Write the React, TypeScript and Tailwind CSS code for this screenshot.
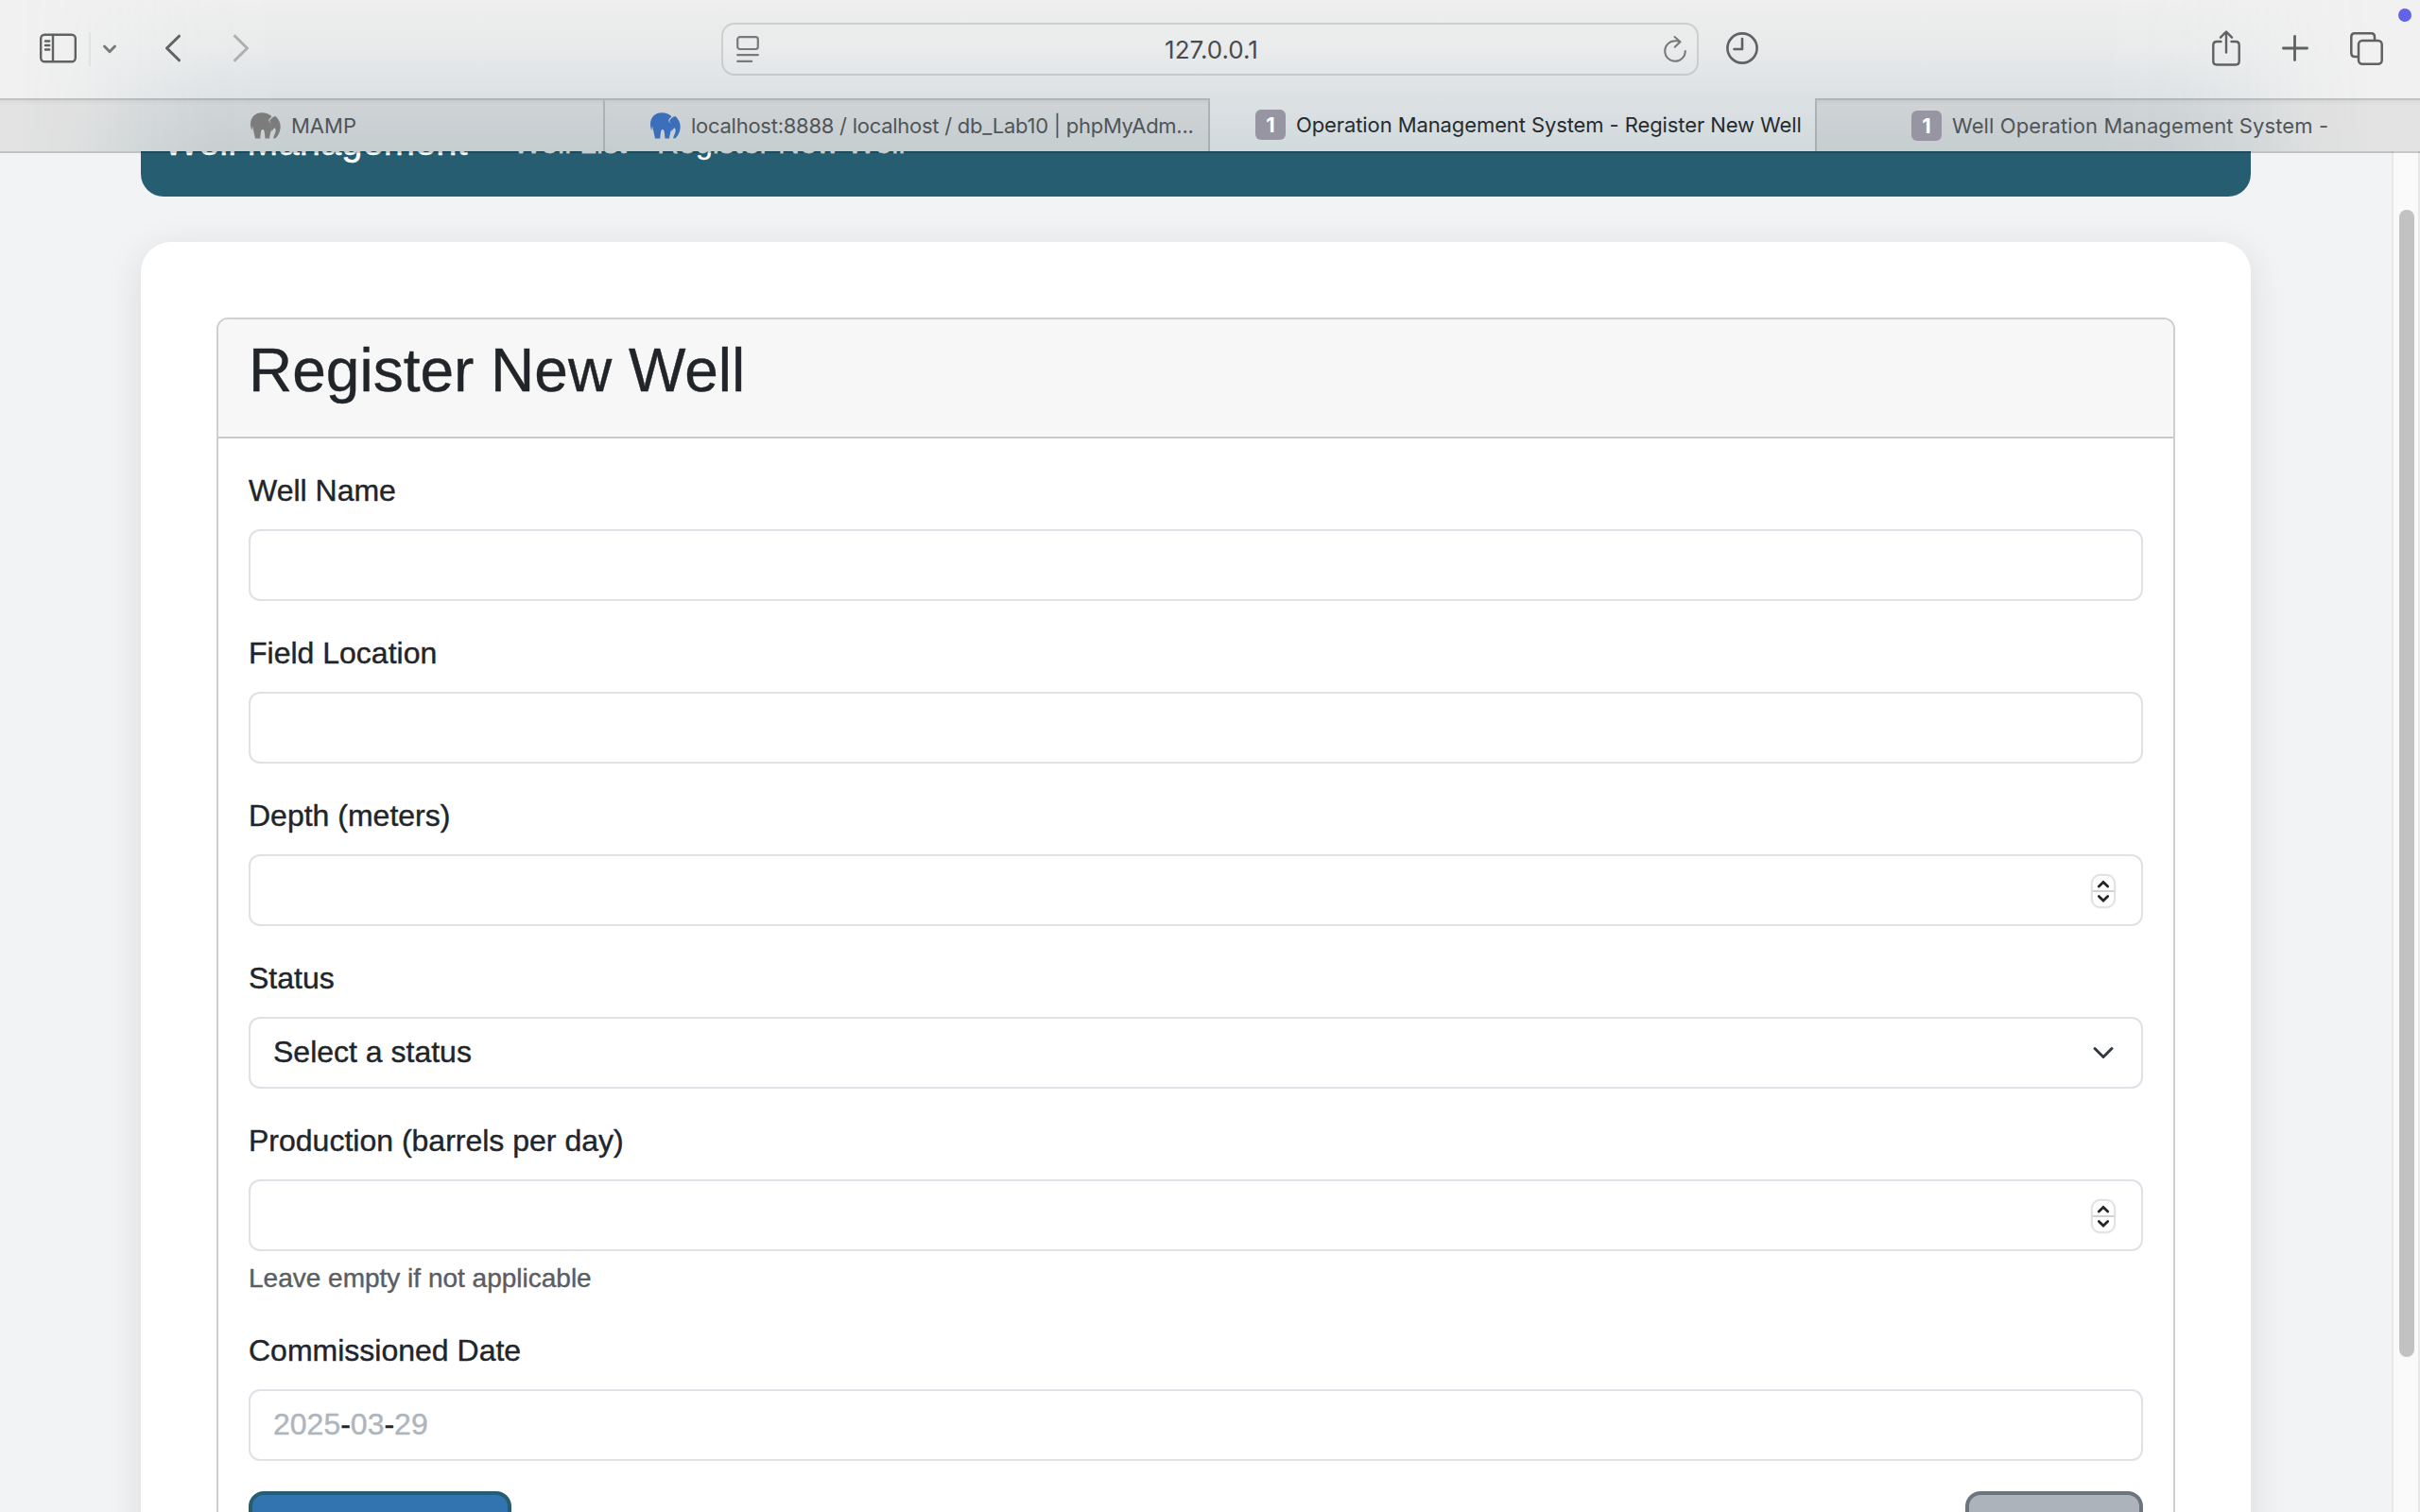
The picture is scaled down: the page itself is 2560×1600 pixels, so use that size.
import { ReactNode } from "react";

const sans = "font-['Helvetica_Neue',Helvetica,'Liberation_Sans',sans-serif]";
const ui = "font-['Inter',sans-serif]";

function Elephant({ className }: { className: string }) {
  return (
    <svg viewBox="0 0 32 28" className={className} fill="currentColor">
      <path d="M0 13C0 5 5 0.300 12 0.300C16.500 0.300 19.800 1.800 22.500 4.300L19.600 7.200C18.900 8.800 19.500 10 21 11L23.200 12.500C23 17 21 20.500 20 27.500H15.500C15 23.500 15 20.500 14.300 19C13.500 17.500 11.700 17.800 11.200 20C10.600 23 10.500 25 10.300 27.500H5L3 18.500L1.900 14L1.600 19C0.500 17 0 15 0 13Z" />
      <path d="M26.500 4C30 7 31.700 11 31.700 15C31.700 20 29 25 26.600 27.200L24.200 27.400C24 26 26 23 26.600 20C27 16.500 25.300 15.500 24.300 17.500L22.200 20V12.200L20.500 10C20 9 20.300 8.200 21 7.400C22.500 5.600 24 4.600 26.500 4Z" />
    </svg>
  );
}

function Badge() {
  return (
    <span className="flex h-8 w-8 shrink-0 items-center justify-center rounded-[6px] bg-[#9695a1] text-[22px] font-bold text-white">
      1
    </span>
  );
}

function Tab({ icon, children, active, className = "" }: { icon: ReactNode; children: ReactNode; active?: boolean; className?: string }) {
  return (
    <div
      className={`flex h-14 w-[640px] items-center text-[22px] ${
        active ? "text-[#262b2e]" : "border-t-2 border-black/15 bg-black/[0.055] text-[#505558] shadow-[inset_0_4px_4px_-2px_rgba(0,0,0,0.05)]"
      } ${className}`}
    >
      {icon}
      <span className="ml-[11px] whitespace-nowrap">{children}</span>
    </div>
  );
}

function Chrome() {
  return (
    <header className={`relative z-10 h-[160px] w-full shrink-0 bg-[#f1f1f1] ${ui}`}>
      <div className="absolute inset-0 bg-[linear-gradient(to_bottom,#eeefee_0px,#ebedec_20px,#e8eaeb_50px,#e0e4e6_85px,#dbe0e3_110px,#d1dadc_160px)] [mask-image:linear-gradient(to_right,transparent_20px,rgba(0,0,0,0.2)_85px,rgba(0,0,0,0.6)_150px,rgba(0,0,0,0.9)_220px,black_300px,black_2220px,rgba(0,0,0,0.9)_2300px,rgba(0,0,0,0.6)_2375px,rgba(0,0,0,0.2)_2440px,transparent_2510px)]" />
      <div className="relative flex h-[104px] items-center text-[#606162]">
        <svg className="relative -top-px ml-[42px] h-[32px] w-[39px]" viewBox="0 0 39 32" fill="none" stroke="currentColor" strokeWidth="2.400">
          <rect x="1.200" y="1.700" width="36.600" height="28.600" rx="4" />
          <path d="M14 2v28M6 8.500h4.200M6 13h4.200M6 17.500h4.200" strokeLinecap="round" />
        </svg>
        <div className="ml-[13px] h-9 w-[2px] bg-black/5" />
        <svg className="ml-[13px] h-[10px] w-[14px] text-[#78797b]" viewBox="0 0 14 10" fill="none" stroke="currentColor" strokeWidth="2.800" strokeLinecap="round" strokeLinejoin="round">
          <path d="M1.500 2 7 7.800 12.500 2" />
        </svg>
        <svg className="relative -top-px ml-[51px] h-[30px] w-[18px]" viewBox="0 0 18 30" fill="none" stroke="currentColor" strokeWidth="3" strokeLinecap="round" strokeLinejoin="round">
          <path d="M15.500 2.200 2.500 15l13 12.800" />
        </svg>
        <svg className="relative -top-px ml-[54px] h-[30px] w-[18px] text-[#adafb0]" viewBox="0 0 18 30" fill="none" stroke="currentColor" strokeWidth="3" strokeLinecap="round" strokeLinejoin="round">
          <path d="M2.500 2.200l13 12.800-13 12.800" />
        </svg>
        <div className="ml-[499px] flex h-14 w-[1034px] items-center justify-between rounded-[14px] border-2 border-black/12 bg-white/5 pr-[11px] pl-[14px]">
          <svg className="h-[28px] w-[24px] text-[#77797a]" viewBox="0 0 24 28" fill="none" stroke="currentColor" strokeWidth="2.200" strokeLinecap="round">
            <rect x="1.200" y="1.200" width="21.600" height="12.800" rx="2.500" />
            <path d="M1.200 20.200h21.600M1.200 26.800h15" />
          </svg>
          <span className="text-[26px] text-[#4a4b4c]">127.0.0.1</span>
          <svg className="h-[28px] w-[24px] text-[#77797a]" viewBox="0 0 24 28" fill="none" stroke="currentColor" strokeWidth="2" strokeLinecap="round" strokeLinejoin="round">
            <path d="M17.500 6.300C16 5.500 14 5.200 12 5.200C6 5.200 1.200 10 1.200 16s4.800 10.800 10.800 10.800S22.800 22 22.800 16M11.500 1l6 5.300-5.800 5.500" />
          </svg>
        </div>
        <svg className="relative -top-px ml-[29px] h-[34px] w-[34px]" viewBox="0 0 34 34" fill="none" stroke="currentColor" strokeWidth="2.600" strokeLinecap="round" strokeLinejoin="round">
          <circle cx="17" cy="17" r="15.600" />
          <path d="M17 7v11H8.500" />
        </svg>
        <svg className="relative -top-px ml-[480px] h-[38px] w-[30px]" viewBox="0 0 30 38" fill="none" stroke="currentColor" strokeWidth="2.400" strokeLinecap="round" strokeLinejoin="round">
          <path d="M9.500 12H5c-2.500 0-3.700 1.200-3.700 3.700v17.100c0 2.500 1.200 3.700 3.700 3.700h20c2.500 0 3.700-1.200 3.700-3.700V15.700c0-2.500-1.200-3.700-3.700-3.700h-4.500M15 23.500V2M9 7.700l6-6.200 6 6.200" />
        </svg>
        <svg className="relative -top-px ml-[44px] h-[28px] w-[28px]" viewBox="0 0 28 28" fill="none" stroke="currentColor" strokeWidth="2.800" strokeLinecap="round">
          <path d="M13.500 1.400v25.200M1.400 14h25.200" />
        </svg>
        <svg className="relative -top-px ml-[44px] h-[35px] w-[35px]" viewBox="0 0 35 35" fill="none" stroke="currentColor" strokeWidth="2.500">
          <rect x="9" y="9" width="24.700" height="24.700" rx="4" />
          <path d="M9 26H5c-2.500 0-3.700-1.200-3.700-3.700V5c0-2.500 1.200-3.700 3.700-3.700h17.300C24.800 1.300 26 2.500 26 5v4" />
        </svg>
        <div className="absolute top-[9px] right-[9px] h-[14px] w-[14px] rounded-full bg-[#6362e8]" />
      </div>
      <nav className="relative flex h-14">
        <Tab icon={<Elephant className="h-[28px] w-8 text-[#7c7c7c]" />} className="border-r-2 pl-[265px]">MAMP</Tab>
        <Tab icon={<Elephant className="h-[28px] w-8 text-[#3b6fbb]" />} className="border-r-2 pl-[48px] tracking-[-0.26px]">localhost:8888 / localhost / db_Lab10 | phpMyAdm...</Tab>
        <Tab icon={<Badge />} active className="pl-[48px] tracking-[-0.1px]">Operation Management System - Register New Well</Tab>
        <Tab icon={<Badge />} className="border-l-2 pl-[100px] tracking-[0.1px]">Well Operation Management System -</Tab>
      </nav>
    </header>
  );
}

function Stepper() {
  return (
    <svg className="relative top-px mr-[3px] h-[36px] w-[26px] drop-shadow-[0_0_1px_rgba(0,0,0,0.35)]" viewBox="0 0 26 36" fill="none">
      <rect x="1.500" y="1.500" width="23" height="33" rx="8" fill="#fff" stroke="#e4e4e4" />
      <path d="M1.500 18h23" stroke="#d2d2d2" strokeWidth="2" />
      <path d="M8.300 13l4.700-4.500 4.700 4.500M8.300 23.500l4.700 4.500 4.700-4.500" stroke="#262626" strokeWidth="2.800" strokeLinecap="round" />
    </svg>
  );
}

function Field({ label, hint, children }: { label: string; hint?: string; children?: ReactNode }) {
  return (
    <div className="mb-8">
      <label className="mb-[18px] block pb-0 leading-[46px]">{label}</label>
      <div className="flex h-[76px] items-center justify-between rounded-[12px] border-2 border-[#dee2e6] bg-white px-6">{children}</div>
      {hint && <div className="mt-2 text-[28px] leading-[42px] text-[#5a5e62]">{hint}</div>}
    </div>
  );
}

export default function App() {
  return (
    <div className={`flex h-[1600px] w-[2560px] flex-col overflow-hidden bg-[#f2f3f5] text-[32px] text-[#212529] ${sans}`}>
      <Chrome />
      <div className="relative flex h-[1440px] overflow-hidden [-webkit-text-stroke:0.4px]">
        <div className="absolute inset-x-0 top-0 z-10 h-[2px] bg-black/20" />
        <main className="flex w-[2530px] flex-col pr-[149px] pl-[149px]">
          <div className="-mt-[68px] flex h-[116px] shrink-0 items-center rounded-b-[24px] bg-[#265d70] pl-6 text-white">
            <span className="text-[40px] leading-[60px]">Well Management</span>
            <span className="mt-[2px] ml-12 leading-[48px]">Well List</span>
            <span className="mt-[2px] ml-8 leading-[48px]">Register New Well</span>
          </div>
          <div className="mt-12 h-[1500px] shrink-0 rounded-[32px] bg-white p-20 shadow-[0_8px_40px_rgba(0,0,0,0.1)]">
            <section className="h-[1400px] rounded-[12px] border-2 border-[#cfcfd0]">
              <div className="h-[126px] rounded-t-[10px] border-b-2 border-[#c9c9ca] bg-[#f7f7f7] px-8 pt-4">
                <h1 className="text-[64px] leading-[77px]">Register New Well</h1>
              </div>
              <form className="p-8">
                <Field label="Well Name" />
                <Field label="Field Location" />
                <Field label="Depth (meters)">
                  <span />
                  <Stepper />
                </Field>
                <Field label="Status">
                  <span className="-mt-[2px]">Select a status</span>
                  <svg className="mr-[4px] h-[24px] w-[24px]" viewBox="0 0 16 16" fill="none" stroke="#343a40" strokeWidth="2" strokeLinecap="round" strokeLinejoin="round">
                    <path d="m2 5 6 6 6-6" />
                  </svg>
                </Field>
                <Field label="Production (barrels per day)" hint="Leave empty if not applicable">
                  <span />
                  <Stepper />
                </Field>
                <Field label="Commissioned Date">
                  <span className="-mt-[2px] text-[#adb5bd]">
                    2025<b className="font-normal text-[#212529]">-</b>03<b className="font-normal text-[#212529]">-</b>29
                  </span>
                </Field>
                <div className="flex justify-between">
                  <div className="h-20 w-[278px] rounded-[16px] border-4 border-[#265d70] bg-[#3274b0]" />
                  <div className="h-20 w-[188px] rounded-[16px] border-4 border-[#6c757d] bg-[#adb3bb]" />
                </div>
              </form>
            </section>
          </div>
        </main>
        <aside className="flex w-[30px] justify-center border-r-2 border-l-2 border-[#e8e8e9] bg-[#fafafa] pl-px">
          <div className="mt-[62px] h-[1214px] w-4 rounded-full bg-[#c2c2c2]" />
        </aside>
      </div>
    </div>
  );
}
